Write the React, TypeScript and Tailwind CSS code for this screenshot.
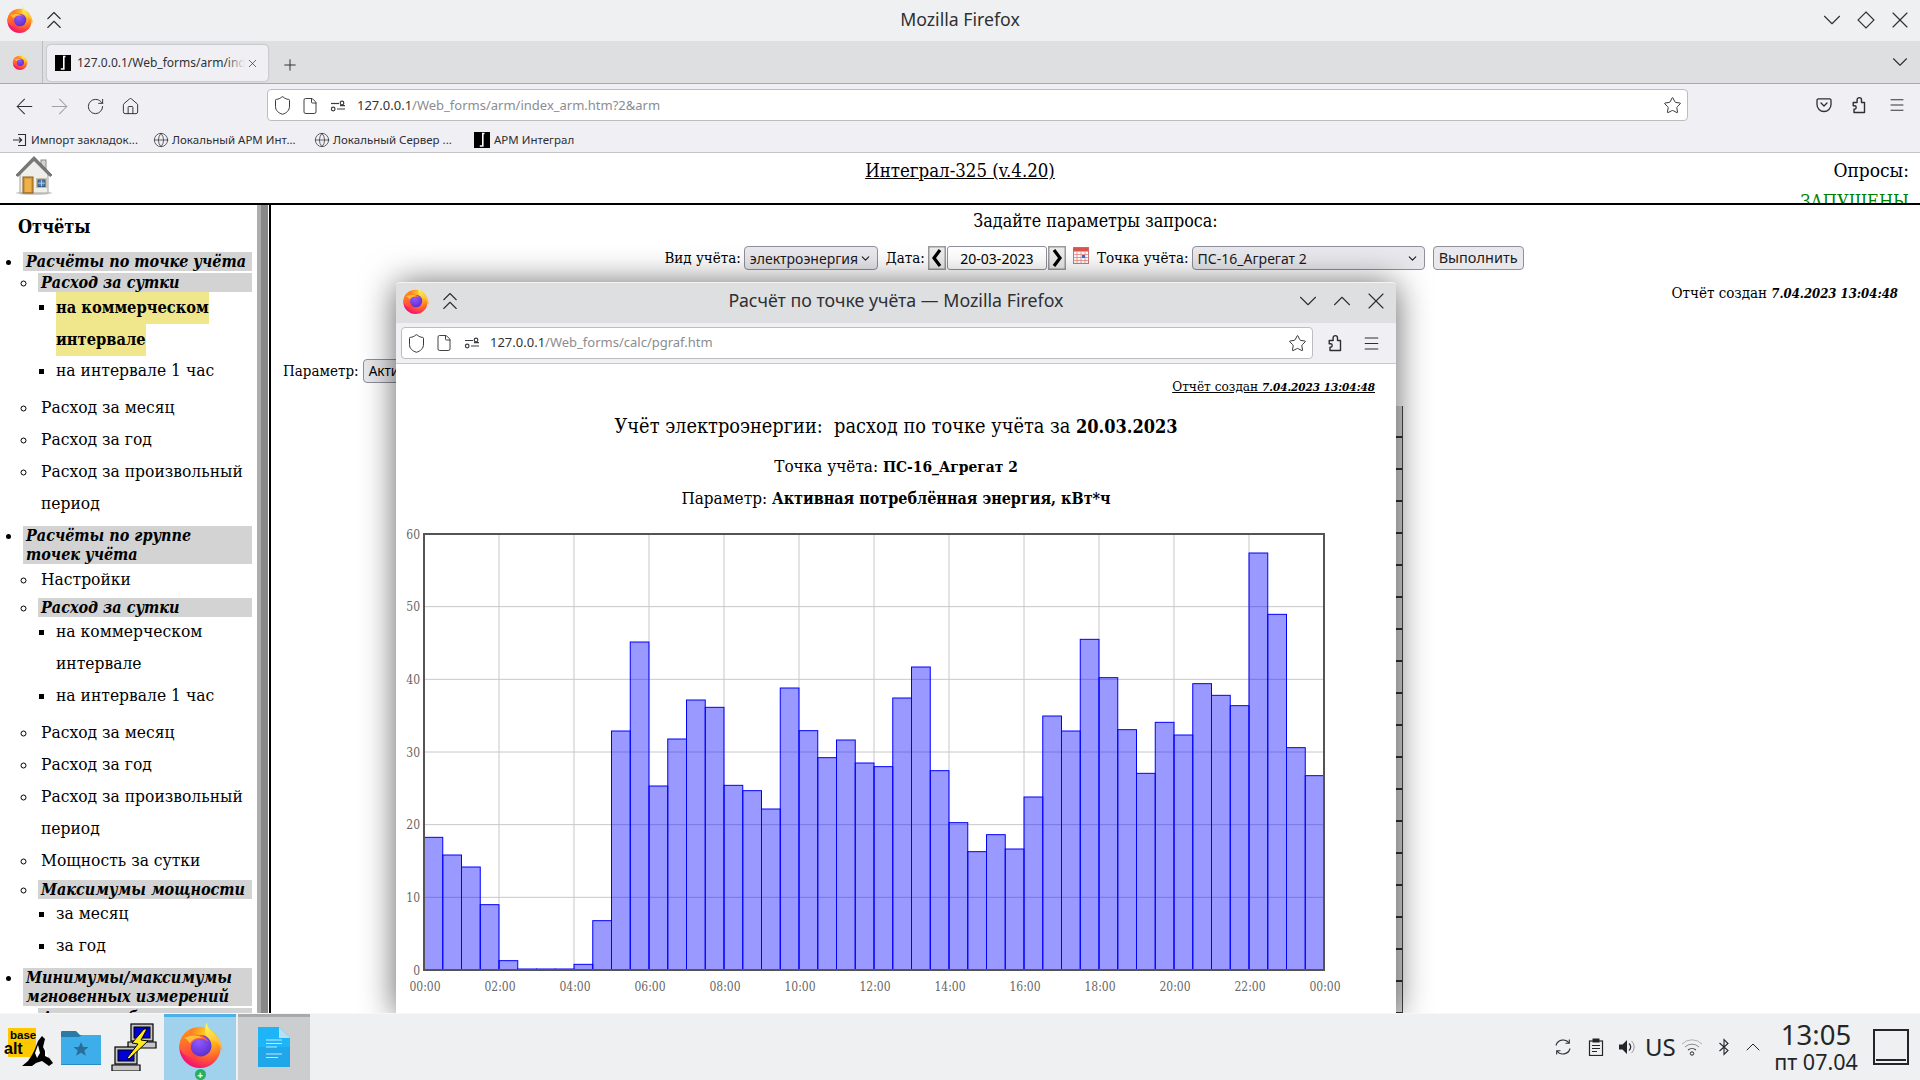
import React from "react";
import { ArrowLeft, ArrowRight, RotateCw, Star, Menu, ChevronDown, ChevronUp, ChevronsUp, X, Plus, Globe, Home, Shield, File } from "lucide-react";

const bars = [952,1005,1041,1154,1322,1347,1347,1347,1333,1202,633,366,798,657,540,562,796,812,867,504,632,713,660,729,740,534,441,752,908,995,944,987,831,588,633,358,473,629,760,607,645,491,526,557,99,283,683,767];
const serif = "font-['DejaVu_Serif_Condensed','DejaVu_Serif',serif]";

function Firefox({ size, id }: { size: number; id: string }) {
  return (
    <svg width={size} height={size} viewBox="3 5 58 58" className="shrink-0">
      <defs>
        <radialGradient id={id + "a"} cx="0.72" cy="0.2" r="0.95">
          <stop offset="0" stopColor="#ffe226" />
          <stop offset="0.35" stopColor="#ff9a1f" />
          <stop offset="0.62" stopColor="#ff5634" />
          <stop offset="0.88" stopColor="#f5156c" />
          <stop offset="1" stopColor="#e31587" />
        </radialGradient>
        <linearGradient id={id + "b"} x1="0.4" y1="0" x2="0.7" y2="1">
          <stop offset="0" stopColor="#fff44f" />
          <stop offset="1" stopColor="#ffa930" />
        </linearGradient>
        <radialGradient id={id + "c"} cx="0.4" cy="0.3" r="0.8">
          <stop offset="0" stopColor="#9059ff" />
          <stop offset="1" stopColor="#592acb" />
        </radialGradient>
        <linearGradient id={id + "d"} x1="0.2" y1="0" x2="0.6" y2="1">
          <stop offset="0" stopColor="#ff980e" />
          <stop offset="1" stopColor="#ff3750" />
        </linearGradient>
      </defs>
      <circle cx="32" cy="37" r="26" fill={`url(#${id}a)`} />
      <path d="M41 5C40 12 46 15 51 21C57 27 61 33 60 43C58 35 53 29 46 27C38 23 36 14 41 5Z" fill={`url(#${id}b)`} />
      <circle cx="33" cy="35" r="13.5" fill={`url(#${id}c)`} />
      <path d="M6 35C7 25 12 18 20 14C18 19 19 21 22 22C29 19 37 22 43 30C35 24 26 25 22 31C18 38 22 46 30 50C16 50 7 45 6 35Z" fill={`url(#${id}d)`} />
      <path d="M12 25C18 22 28 20 35 25C27 24 22 27 19 32C17 29 15 26 12 25Z" fill="#ffbd3f" />
    </svg>
  );
}

function Favicon({ size }: { size: number }) {
  return (
    <svg width={size} height={size} viewBox="0 0 16 16" className="shrink-0">
      <rect width="16" height="16" fill="#000" />
      <path d="M10.5 1.5H8.8V14H5.8" stroke="#fff" strokeWidth="1.6" fill="none" />
    </svg>
  );
}

function Perm() {
  return (
    <svg width="16" height="16" viewBox="0 0 16 16" fill="none" stroke="#3b3b40" strokeWidth="1.2" className="shrink-0">
      <path d="M1 5.5h8" />
      <circle cx="12" cy="5" r="1.8" />
      <circle cx="3.2" cy="11" r="1.8" />
      <path d="M7 11h8M10 7.7h5" />
    </svg>
  );
}

function Puzzle({ size = 18 }: { size?: number }) {
  return (
    <svg width={size} height={size} viewBox="0 0 18 18" fill="none" stroke="#2e2e32" strokeWidth="1.4" strokeLinejoin="round" className="shrink-0">
      <path d="M3 16.5h10.5v-10h-3V3.8A2.2 2.2 0 0 0 8.3 1.6 2.2 2.2 0 0 0 6.1 3.8v2.7H2.2v3.3h1.3a1.7 1.7 0 0 1 0 3.4H3Z" />
    </svg>
  );
}

function Pocket() {
  return (
    <svg width="16" height="16" viewBox="0 0 16 16" fill="none" stroke="#2e2e32" strokeWidth="1.3" strokeLinecap="round" strokeLinejoin="round" className="shrink-0">
      <path d="M2.5 1.8h11a1.5 1.5 0 0 1 1.5 1.5v4.2a7 7 0 0 1-14 0V3.3a1.5 1.5 0 0 1 1.5-1.5Z" />
      <path d="M5 6l3 3 3-3" />
    </svg>
  );
}

function HouseIcon() {
  return (
    <svg width="38" height="40" viewBox="0 0 38 40" className="shrink-0">
      <ellipse cx="19" cy="38" rx="18" ry="2" fill="#cfcfcf" />
      <rect x="26" y="5" width="5" height="9" fill="#d5d5d0" stroke="#8a8a86" />
      <path d="M5 17L19 3 33 17V38H5Z" fill="#eeeeea" stroke="#a5a5a0" />
      <path d="M1 20L19 1.5 37 20 35 21.5 19 5.5 3 21.5Z" fill="#777a78" stroke="#555" strokeWidth="0.7" />
      <rect x="8" y="22" width="10" height="16" fill="#d99a35" stroke="#8a5d16" />
      <rect x="10" y="24" width="6" height="13" fill="#eeb24c" />
      <rect x="21" y="23" width="11" height="10" fill="#c4c0ab" />
      <rect x="23" y="25" width="7" height="6.5" fill="#4d7fb8" stroke="#34547a" />
      <path d="M26.5 25v6.5M23 28.2h7" stroke="#c8d6e6" strokeWidth="0.8" />
    </svg>
  );
}

function SideHead({ children }: { children: React.ReactNode }) {
  return <div className="bg-[#d3d3d3] pl-[3px] text-[16px] leading-[19px] font-bold italic">{children}</div>;
}

function Line({ children }: { children: React.ReactNode }) {
  return <div className="pl-[3px] leading-[32px]">{children}</div>;
}

function Sidebar() {
  return (
    <div className={"w-[257px] shrink-0 overflow-hidden bg-white pt-[6px] text-[17.3px] text-black " + serif}>
      <div className="ml-[18px] h-[32px] text-[18px] leading-[32px] font-bold">Отчёты</div>
      <ul className="mt-[9px] ml-[23px] w-[229px] list-disc leading-[19px]">
        <li>
          <SideHead>Расчёты по точке учёта</SideHead>
          <ul className="mt-[2px] ml-[15px] list-[circle]">
            <li>
              <SideHead>Расход за сутки</SideHead>
              <ul className="ml-[18px] list-[square]">
                <li className="text-[16.3px] leading-[32px] font-bold">
                  <div className="w-fit bg-[#f0e68c]">на коммерческом</div>
                  <div className="w-fit bg-[#f0e68c]">интервале</div>
                </li>
                <li className="-mt-[2px] leading-[32px]">на интервале 1 час</li>
              </ul>
            </li>
            <li className="mt-[5px]"><Line>Расход за месяц</Line></li>
            <li><Line>Расход за год</Line></li>
            <li><Line>Расход за произвольный период</Line></li>
          </ul>
        </li>
        <li className="mt-[7px]">
          <SideHead>Расчёты по группе<br />точек учёта</SideHead>
          <ul className="-mt-[1px] ml-[15px] list-[circle]">
            <li><Line>Настройки</Line></li>
            <li className="mt-[3px]">
              <SideHead>Расход за сутки</SideHead>
              <ul className="-mt-[2px] ml-[18px] list-[square] leading-[32px]">
                <li>на коммерческом интервале</li>
                <li>на интервале 1 час</li>
              </ul>
            </li>
            <li className="mt-[5px]"><Line>Расход за месяц</Line></li>
            <li><Line>Расход за год</Line></li>
            <li><Line>Расход за произвольный период</Line></li>
            <li><Line>Мощность за сутки</Line></li>
            <li className="mt-[4px]">
              <SideHead>Максимумы мощности</SideHead>
              <ul className="-mt-[2px] ml-[18px] list-[square] leading-[32px]">
                <li>за месяц</li>
                <li>за год</li>
              </ul>
            </li>
          </ul>
        </li>
        <li className="mt-[7px]">
          <SideHead>Минимумы/максимумы<br />мгновенных измерений</SideHead>
          <ul className="mt-[2px] ml-[15px] list-[circle]">
            <li><SideHead>Анализ небаланса</SideHead></li>
          </ul>
        </li>
      </ul>
    </div>
  );
}

function Control({ w, children }: { w: string; children: React.ReactNode }) {
  return (
    <div className={"flex h-[24px] items-center justify-between rounded-[4px] border border-[#8f8f9d] bg-[#e9e9ed] pr-[5px] pl-[5px] font-['Noto_Sans',sans-serif] text-[14px] text-[#1b1b1f] " + w}>
      <span>{children}</span>
      <ChevronDown size={13} strokeWidth={2} />
    </div>
  );
}

function Bevel({ dir }: { dir: "l" | "r" }) {
  return (
    <svg width="18" height="24" viewBox="0 0 18 24" className="shrink-0">
      <rect width="18" height="24" fill="#9a9a9a" />
      <rect x="1.5" y="1.5" width="15" height="21" fill="#ececec" />
      <path d={dir === "l" ? "M12 4L6 12l6 8" : "M6 4l6 8-6 8"} stroke="#000" strokeWidth="3.2" fill="none" />
    </svg>
  );
}

function CalendarIcon() {
  return (
    <svg width="16" height="17" viewBox="0 0 16 17" className="shrink-0">
      <rect x="0.5" y="0.5" width="15" height="16" fill="#fff" stroke="#c77" />
      <rect x="0.5" y="0.5" width="15" height="4" fill="#d9544f" />
      <path d="M0.5 7.5h15M0.5 10.5h15M0.5 13.5h15M4 4.5v12M8 4.5v12M12 4.5v12" stroke="#e58a85" strokeWidth="0.8" />
      <rect x="9" y="8" width="3" height="3" fill="#3f6fd0" />
    </svg>
  );
}

function MainContent() {
  return (
    <div className={"relative flex-1 border-l-2 border-black text-[15px] text-black " + serif}>
      <div className="h-[32px] text-center text-[17.8px] leading-[32px]">Задайте параметры запроса:</div>
      <div className="mt-[9px] flex h-[24px] items-center justify-center pr-[3px]">
        <span>Вид учёта:</span>
        <div className="ml-[3px]"><Control w="w-[134px]">электроэнергия</Control></div>
        <span className="ml-[8px]">Дата:</span>
        <div className="ml-[3px]"><Bevel dir="l" /></div>
        <div className="mx-[1px] flex h-[24px] w-[100px] items-center justify-center rounded-[3px] border border-[#8f8f9d] bg-white font-['Noto_Sans',sans-serif] text-[14px]">20-03-2023</div>
        <Bevel dir="r" />
        <div className="mr-[8px] ml-[7px] -translate-y-[3px]"><CalendarIcon /></div>
        <span>Точка учёта:</span>
        <div className="ml-[3px]"><Control w="w-[233px]">ПС-16_Агрегат 2</Control></div>
        <div className="ml-[8px] flex h-[24px] w-[91px] items-center justify-center rounded-[4px] border border-[#8f8f9d] bg-[#e9e9ed] font-['Noto_Sans',sans-serif] text-[14.5px] text-[#1b1b1f]">Выполнить</div>
      </div>
      <div className="mt-[13px] h-[20px] pr-[22px] text-right text-[15px] leading-[20px]">
        Отчёт создан <b className="text-[13px]"><i>7.04.2023 13:04:48</i></b>
      </div>
      <div className="mt-[56px] ml-[12px] flex h-[24px] items-center">
        <span>Параметр:</span>
        <div className="ml-[4px] flex h-[24px] w-[80px] items-center rounded-[4px] border border-[#8f8f9d] bg-[#e9e9ed] pl-[5px] font-['Noto_Sans',sans-serif] text-[13.5px]">Активная</div>
      </div>
      <div className="absolute top-[201px] left-[1125px] h-[610px] w-[7px] border-r border-[#444] bg-[repeating-linear-gradient(to_bottom,#d8d8d8_0,#d8d8d8_30px,#333_30px,#333_32px)]" />
    </div>
  );
}

function Chart() {
  const top = 534, bottom = 970, left = 424, right = 1324;
  const w = (right - left) / 48;
  const ys = [0, 10, 20, 30, 40, 50, 60];
  return (
    <svg viewBox="400 520 960 480" width="960" height="480" className="ml-[4px] block">
      {ys.map((v) => {
        const y = bottom - ((bottom - top) * v) / 60;
        return (
          <g key={v}>
            <line x1={left} x2={right} y1={y} y2={y} stroke="#c8c8c8" strokeWidth="1" />
            <text x="420" y={y + 4.5} textAnchor="end" fontSize="12" fill="#666" fontFamily="'DejaVu Serif Condensed','DejaVu Serif',serif">{v}</text>
          </g>
        );
      })}
      {Array.from({ length: 13 }).map((_, i) => {
        const x = left + 75 * i;
        const h = i * 2 === 24 ? 0 : i * 2;
        return (
          <g key={i}>
            <line x1={x} x2={x} y1={top} y2={bottom} stroke="#c8c8c8" strokeWidth="1" />
            <text x={x + 1} y="991" textAnchor="middle" fontSize="12" fill="#666" fontFamily="'DejaVu Serif Condensed','DejaVu Serif',serif">{String(h).padStart(2, "0") + ":00"}</text>
          </g>
        );
      })}
      {bars.map((b, i) => {
        const y = 520 + b / 3;
        return (
          <rect key={i} x={left + i * w} y={y} width={w} height={bottom - y} fill="#0000ff" fillOpacity="0.4" stroke="#0000ff" strokeWidth="1" />
        );
      })}
      <rect x={left} y={top} width={right - left} height={bottom - top} fill="none" stroke="#545454" strokeWidth="2" />
    </svg>
  );
}

function WinButtons({ diamond }: { diamond?: boolean }) {
  return (
    <div className="flex items-center gap-[4px] pr-[5px]">
      <ChevronDown size={30} strokeWidth={0.9} />
      {diamond ? (
        <svg width="30" height="30" viewBox="0 0 30 30" fill="none" stroke="currentColor" strokeWidth="1.1"><path d="M15 7l8 8-8 8-8-8Z" /></svg>
      ) : (
        <ChevronUp size={30} strokeWidth={0.9} />
      )}
      <X size={28} strokeWidth={1} className="mx-[1px]" />
    </div>
  );
}

function Popup() {
  return (
    <div className="absolute top-[282px] left-[396px] z-10 flex h-[731px] w-[1000px] flex-col overflow-hidden rounded-t-[4px] border-t border-[#f4f4f4] bg-white shadow-[0_2px_34px_rgba(0,0,0,0.62)]">
      <div className="relative flex h-[40px] shrink-0 items-center bg-[#dedfe1] pb-[5px] pl-[6px] font-['Noto_Sans',sans-serif] text-[#2e3033]">
        <Firefox size={27} id="p" />
        <div className="ml-[6px]"><ChevronsUp size={30} strokeWidth={0.9} /></div>
        <div className="flex-1 pl-[34px] text-center text-[17.8px]">Расчёт по точке учёта — Mozilla Firefox</div>
        <WinButtons />
      </div>
      <div className="flex h-[41px] shrink-0 items-center border-b border-[#c8c8c8] bg-[#f0f0f4] pl-[5px]">
        <div className="flex h-[32px] w-[912px] items-center rounded-[4px] border border-[#bdbdbd] bg-white pl-[4px] font-['Noto_Sans',sans-serif] text-[13px]">
          <Shield size={21} strokeWidth={1.1} color="#2e2e32" />
          <div className="ml-[8px]"><File size={18} strokeWidth={1.2} color="#2e2e32" /></div>
          <div className="ml-[11px]"><Perm /></div>
          <span className="ml-[10px] text-[#333]">127.0.0.1</span>
          <span className="text-[#8c8c90]">/Web_forms/calc/pgraf.htm</span>
          <div className="ml-auto pr-[5px]"><Star size={19} strokeWidth={1.2} color="#2e2e32" /></div>
        </div>
        <div className="ml-[14px]"><Puzzle /></div>
        <div className="ml-[17px]"><Menu size={19} strokeWidth={1.3} color="#2e2e32" /></div>
      </div>
      <div className={"flex-1 overflow-hidden text-black " + serif}>
        <div className="mt-[12px] h-[20px] pr-[21px] text-right text-[13.5px] leading-[20px] underline">
          Отчёт создан <b className="text-[11.6px]"><i>7.04.2023 13:04:48</i></b>
        </div>
        <div className="mt-[15px] h-[32px] text-center text-[19.8px] leading-[32px] whitespace-pre-wrap">
          {"Учёт электроэнергии:  расход по точке учёта за "}<b className="text-[18px]">20.03.2023</b>
        </div>
        <div className="mt-[7px] h-[32px] text-center text-[17px] leading-[32px]">Точка учёта: <b className="text-[15.4px]">ПС-16_Агрегат 2</b></div>
        <div className="h-[32px] text-center text-[17px] leading-[32px]">Параметр: <b className="text-[16px]">Активная потреблённая энергия, кВт*ч</b></div>
        <div className="mt-[6px]"><Chart /></div>
      </div>
    </div>
  );
}

function BaseAlt() {
  return (
    <svg width="52" height="44" viewBox="0 0 52 44" className="shrink-0">
      <rect x="6" y="3" width="28" height="29" fill="#fdc800" />
      <text x="8" y="14" fontSize="11.5" fontWeight="700" fontFamily="'Liberation Sans',sans-serif" fill="#000">base</text>
      <text x="2" y="29" fontSize="16" fontWeight="700" fontFamily="'Liberation Sans',sans-serif" fill="#000">alt</text>
      <path d="M20 41L26 36 30 30 33 24 36 16 40 11 43 14 41 22 45 30 51 38 47 41 40 36 34 38 30 41Z" fill="#000" />
      <path d="M36 20L38 28 35 33 33 28Z" fill="#fff" />
      <path d="M43 22L47 33 43 31Z" fill="#fff" />
    </svg>
  );
}

function FolderIcon() {
  return (
    <svg width="40" height="36" viewBox="0 0 40 36" className="shrink-0">
      <path d="M0 3a1 1 0 0 1 1-1h14l4 4h20a1 1 0 0 1 1 1v8H0Z" fill="#2a7aa8" />
      <path d="M0 8h18l3-2h19v30H0Z" fill="#3daee9" />
      <rect y="35" width="40" height="1" fill="#2a8cc4" />
      <path d="M20 13l2.2 5h5.3l-4.2 3.4 1.6 5.3L20 23.8l-4.9 2.9 1.6-5.3L12.5 18h5.3Z" fill="#2a6d97" />
    </svg>
  );
}

function PuttyIcon() {
  const pc = (x: number, y: number) => (
    <g transform={`translate(${x} ${y})`}>
      <rect x="0" y="0" width="22" height="17" fill="#c6c6c6" stroke="#000" strokeWidth="1.2" />
      <rect x="3" y="3" width="16" height="11" fill="#0000d8" stroke="#000" />
      <path d="M-3 18h28v6H-3Z" fill="#c6c6c6" stroke="#000" strokeWidth="1.2" />
    </g>
  );
  return (
    <svg width="48" height="48" viewBox="0 0 48 48" className="shrink-0">
      {pc(21, 1)}
      {pc(5, 24)}
      <path d="M34 6L22 20l6 1-11 14 2 1 19-18-7-1 6-11Z" fill="#ffe81a" stroke="#000" strokeWidth="1" />
    </svg>
  );
}

function DocIcon() {
  return (
    <svg width="32" height="40" viewBox="0 0 32 40" className="shrink-0">
      <path d="M0 0h21l11 11v29H0Z" fill="#1eb4f8" />
      <path d="M0 20h32v20H0Z" fill="#2196da" opacity="0.45" />
      <path d="M21 0l11 11H21Z" fill="#b8dff2" />
      <path d="M8 13h16M8 16.5h16M8 20h11M8 27h16M8 30.5h12" stroke="#d8f1fd" strokeWidth="0.9" />
    </svg>
  );
}

function Tray() {
  return (
    <div className="ml-auto flex items-center pr-[11px] text-[#232629]">
      <svg width="20" height="20" viewBox="0 0 20 20" fill="none" stroke="#2f3236" strokeWidth="1.1" className="shrink-0">
        <path d="M3 8.5A7.3 7.3 0 0 1 16 6M17 11.5A7.3 7.3 0 0 1 4 14" />
        <path d="M16.3 2.5V6.3H12.5M3.7 17.5v-3.8h3.8" />
      </svg>
      <svg width="16" height="18" viewBox="0 0 16 18" className="ml-[15px] shrink-0">
        <rect x="1.5" y="3" width="13" height="14.5" fill="none" stroke="#232629" strokeWidth="1.2" />
        <rect x="4.5" y="0.5" width="7" height="4" fill="#232629" />
        <path d="M4 7.5h8M4 10.5h8M4 13.5h5" stroke="#232629" />
      </svg>
      <svg width="18" height="18" viewBox="0 0 18 18" className="ml-[14px] shrink-0">
        <path d="M1 6.5h3.5L9 2v14l-4.5-4.5H1Z" fill="#232629" />
        <path d="M11 5.5a4.5 4.5 0 0 1 0 7" stroke="#232629" strokeWidth="1.3" fill="none" />
        <path d="M13.5 3a8 8 0 0 1 0 12" stroke="#9a9a9a" strokeWidth="1" fill="none" />
      </svg>
      <span className="ml-[9px] w-[30px] font-['Noto_Sans',sans-serif] text-[24px] leading-none">US</span>
      <svg width="22" height="18" viewBox="0 0 22 18" fill="none" className="ml-[6px] shrink-0">
        <path d="M1 6a14 14 0 0 1 20 0" stroke="#b0b0b0" strokeWidth="1" />
        <path d="M4 9a10 10 0 0 1 14 0" stroke="#8a8a8a" strokeWidth="1" />
        <path d="M7 12a6 6 0 0 1 8 0" stroke="#444" strokeWidth="1.1" />
        <circle cx="11" cy="15.5" r="1.7" stroke="#232629" strokeWidth="1" />
      </svg>
      <svg width="12" height="18" viewBox="0 0 12 18" fill="none" stroke="#232629" strokeWidth="1.1" className="ml-[15px] shrink-0">
        <path d="M1.5 5L10 12.5 6 16.5V1.5L10 5.5 1.5 13" />
      </svg>
      <div className="ml-[11px]"><ChevronUp size={24} strokeWidth={1} /></div>
      <div className="ml-[10px] flex w-[82px] flex-col items-center pb-[3px] font-['Noto_Sans',sans-serif] whitespace-nowrap">
        <span className="text-[27.5px] leading-[32px]">13:05</span>
        <span className="text-[21.5px] leading-[21px]">пт 07.04</span>
      </div>
      <div className="ml-[16px] flex h-[36px] w-[36px] items-end border-[2.5px] border-[#232629] px-[1px] pb-[2px]">
        <div className="h-[2px] w-full bg-[#232629]" />
      </div>
    </div>
  );
}

export default function App() {
  return (
    <div className="relative flex h-[1080px] w-[1920px] flex-col overflow-hidden bg-white font-['Noto_Sans',sans-serif]">
      <div className="flex h-[41px] shrink-0 items-center bg-[#eff0f1] pb-[2px] pl-[6px] text-[#2e3033]">
        <Firefox size={27} id="t" />
        <div className="ml-[6px]"><ChevronsUp size={30} strokeWidth={0.9} /></div>
        <div className="flex-1 pl-[34px] text-center text-[17.7px]">Mozilla Firefox</div>
        <WinButtons diamond />
      </div>
      <div className="flex h-[43px] shrink-0 items-end border-b border-[#a9a9ad] bg-[#dedfe1] text-[#2e3033]">
        <div className="flex h-[42px] w-[43px] items-center justify-center border-r border-[#bcbcc0] pr-[2px]"><Firefox size={16} id="s" /></div>
        <div className="relative mb-[2px] ml-[4px] flex h-[36px] w-[221px] items-center rounded-[4px] bg-[#f0f0f4] pl-[8px] shadow-[0_0_2px_rgba(0,0,0,0.3)]">
          <Favicon size={16} />
          <span className="ml-[6px] w-[168px] overflow-hidden text-[12px] whitespace-nowrap">127.0.0.1/Web_forms/arm/index_arm.htm</span>
          <div className="absolute top-[6px] left-[178px] h-[24px] w-[20px] bg-gradient-to-r from-transparent to-[#f0f0f4]" />
          <X size={13} strokeWidth={1.3} className="ml-[1px]" />
        </div>
        <div className="mb-[9px] ml-[13px]"><Plus size={18} strokeWidth={1.3} /></div>
        <div className="mr-[7px] mb-[8px] ml-auto"><ChevronDown size={26} strokeWidth={1} /></div>
      </div>
      <div className="flex h-[41px] shrink-0 items-center bg-[#f0f0f4] pt-[3px] pl-[12px] text-[#2e2e32]">
        <ArrowLeft size={25} strokeWidth={1} />
        <div className="ml-[10px]"><ArrowRight size={25} strokeWidth={1} color="#a0a0a4" /></div>
        <div className="ml-[14px]"><RotateCw size={19} strokeWidth={1.2} /></div>
        <div className="ml-[16px]"><Home size={19} strokeWidth={1.2} /></div>
      </div>
      <div className="-mt-[36px] ml-[267px] flex h-[32px] w-[1421px] shrink-0 items-center rounded-[4px] border border-[#bdbdbd] bg-white pt-[1px] pl-[4px] text-[13px] text-[#2e2e32]">
        <Shield size={21} strokeWidth={1.1} />
        <div className="ml-[8px]"><File size={18} strokeWidth={1.2} /></div>
        <div className="ml-[11px]"><Perm /></div>
        <span className="ml-[11px] text-[#333]">127.0.0.1</span>
        <span className="text-[#8c8c90]">/Web_forms/arm/index_arm.htm?2&amp;arm</span>
        <div className="ml-auto pr-[5px]"><Star size={19} strokeWidth={1.2} /></div>
      </div>
      <div className="flex h-[32px] shrink-0 items-center border-b border-[#c4c4c6] bg-[#f0f0f4] pt-[6px] pl-[12px] text-[11.5px] text-[#2e2e32]">
        <svg width="16" height="16" viewBox="0 0 16 16" fill="none" stroke="#2e2e32" strokeWidth="1.1"><path d="M6 2.5h7.5v11H6M1 8h8.5M7 5.5L9.7 8 7 10.5" /></svg>
        <span className="ml-[3px] w-[122px]">Импорт закладок...</span>
        <Globe size={16} strokeWidth={1.1} />
        <span className="ml-[3px] w-[142px]">Локальный АРМ Инт...</span>
        <Globe size={16} strokeWidth={1.1} />
        <span className="ml-[3px] w-[141px]">Локальный Сервер ...</span>
        <Favicon size={16} />
        <span className="ml-[4px]">АРМ Интеграл</span>
      </div>
      <div className="absolute top-[89px] right-0 flex h-[32px] items-center gap-[19px] pr-[14px]">
        <Pocket />
        <Puzzle />
        <Menu size={18} strokeWidth={1.3} color="#2e2e32" />
      </div>
      <div className={"grid h-[52px] shrink-0 grid-cols-3 overflow-hidden border-b-2 border-black text-[18px] text-black " + serif}>
        <div className="pt-[2px] pl-[15px]"><HouseIcon /></div>
        <div className="pt-[2px] text-center text-[18.5px] leading-[32px]"><span className="underline">Интеграл-325 (v.4.20)</span></div>
        <div className="pt-[1px] pr-[11px] text-right leading-[32px]">
          <div className="text-[19px]">Опросы:</div>
          <div className="text-[#008000]">ЗАПУЩЕНЫ</div>
        </div>
      </div>
      <div className="flex min-h-0 flex-1">
        <Sidebar />
        <div className="flex w-[12px] shrink-0"><div className="w-[4px] bg-[#adadad]" /><div className="w-[7px] bg-[#888]" /><div className="w-[1px] bg-white" /></div>
        <MainContent />
      </div>
      <Popup />
      <div className="relative z-20 flex h-[67px] shrink-0 items-stretch border-t border-[#f7f7f7] bg-[#eff0f1]">
        <div className="ml-[2px] flex items-center"><BaseAlt /></div>
        <div className="ml-[7px] flex items-center"><FolderIcon /></div>
        <div className="ml-[9px] flex items-center"><PuttyIcon /></div>
        <div className="relative ml-[6px] flex w-[72px] flex-col items-center border-t-[3px] border-[#4fb0e8] bg-[#a1d2ed] pt-[5px]">
          <Firefox size={46} id="b" />
          <div className="absolute bottom-0 flex h-[11px] w-[11px] items-center justify-center rounded-full bg-[#27ae60] text-[10px] leading-none font-bold text-white">+</div>
        </div>
        <div className="ml-[2px] flex w-[72px] items-center justify-center border-t-[3px] border-[#a9a9a9] bg-[#cbcdcf] pb-[4px]"><DocIcon /></div>
        <Tray />
      </div>
    </div>
  );
}
